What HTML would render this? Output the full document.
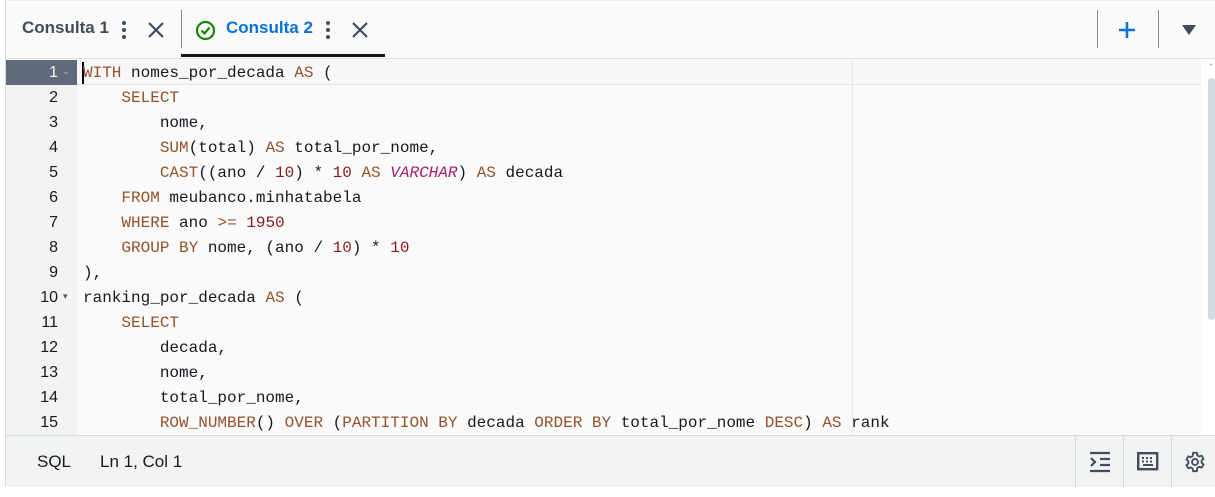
<!DOCTYPE html>
<html><head><meta charset="utf-8"><style>
*{margin:0;padding:0;box-sizing:border-box}
body{width:1215px;height:497px;background:#fff;font-family:"Liberation Sans",sans-serif;position:relative;overflow:hidden}
.wrap{position:absolute;left:5px;top:0;right:0;height:487px;border-left:1px solid #d5dbdb;background:#fafafa}
.tabs{position:absolute;left:0;top:0;right:0;height:59px;background:#fafafa;border-top:1px solid #eaeded;border-bottom:1px solid #dfe3e3}
.tab{position:absolute;top:17px;font-size:17px;font-weight:bold;color:#414d5c}
.sep{position:absolute;width:1px;background:#7d8998}
.code{position:absolute;left:0;top:60px;width:1195px;height:375px;background:#fafafa;overflow:hidden}
.gut{position:absolute;left:0;top:0;width:71px;height:375px;background:#f2f3f3}
.ln{position:absolute;left:0;width:71px;height:25px;text-align:right;padding-right:19px;font:16px/26px "Liberation Sans",sans-serif;color:#16191f}
.line{position:absolute;left:77px;height:25px;font:16px/26px "Liberation Mono",monospace;color:#16191f;white-space:pre}
.k{color:#93532a}.n{color:#8b1a1a}.t{color:#a3216e;font-style:italic}
.foot{position:absolute;left:0;right:0;top:435px;height:52px;background:#f2f3f3;border-top:1px solid #d5dbdb}
</style></head><body>
<div class="wrap">
<div class="tabs">
 <div class="tab" style="left:16px">Consulta 1</div>
 <svg style="position:absolute;left:115px;top:19px" width="6" height="20"><circle cx="3" cy="3" r="2" fill="#414d5c"/><circle cx="3" cy="10" r="2" fill="#414d5c"/><circle cx="3" cy="17" r="2" fill="#414d5c"/></svg>
 <svg style="position:absolute;left:141px;top:20px" width="18" height="18"><path d="M2 2L16 16M16 2L2 16" stroke="#414d5c" stroke-width="2.2"/></svg>
 <div class="sep" style="left:175px;top:9px;height:38px"></div>
 <svg style="position:absolute;left:189px;top:19px" width="21" height="21"><circle cx="10.5" cy="10.5" r="8.5" fill="none" stroke="#1d8102" stroke-width="2.2"/><path d="M6.5 10.5l3 3 5-6" fill="none" stroke="#1d8102" stroke-width="2.2"/></svg>
 <div class="tab" style="left:220px;color:#0972d3">Consulta 2</div>
 <svg style="position:absolute;left:319px;top:19px" width="6" height="20"><circle cx="3" cy="3" r="2" fill="#414d5c"/><circle cx="3" cy="10" r="2" fill="#414d5c"/><circle cx="3" cy="17" r="2" fill="#414d5c"/></svg>
 <svg style="position:absolute;left:345px;top:20px" width="18" height="18"><path d="M2 2L16 16M16 2L2 16" stroke="#414d5c" stroke-width="2.2"/></svg>
 <div style="position:absolute;left:175px;top:53px;width:204px;height:3px;background:#16191f"></div>
 <div class="sep" style="left:1091px;top:9px;height:38px"></div>
 <svg style="position:absolute;left:1112px;top:20px" width="18" height="18"><path d="M9 1V17M1 9H17" stroke="#0972d3" stroke-width="2.6"/></svg>
 <div class="sep" style="left:1152px;top:9px;height:38px"></div>
 <svg style="position:absolute;left:1175px;top:23px" width="16" height="12"><path d="M1 1H15L8 11Z" fill="#414d5c"/></svg>
</div>
<div class="code">
 <div class="gut"></div>
 <div style="position:absolute;left:0;top:0;width:71px;height:25px;background:#5f6b7a"></div>
 <div style="position:absolute;left:71px;top:0;width:1124px;height:25px;background:#f7f7f7;border-bottom:1px solid #e6e6e6"></div>
 <div style="position:absolute;left:846px;top:0;width:1px;height:375px;background:#e8e8e8"></div>
 <div style="position:absolute;left:76px;top:2px;width:2px;height:22px;background:#000"></div>
 <div class="ln" style="top:0;color:#fff">1</div><div style="position:absolute;left:56px;top:6px;font-size:10px;color:#aab">⌄</div>
 <div class="ln" style="top:25px">2</div><div class="ln" style="top:50px">3</div><div class="ln" style="top:75px">4</div><div class="ln" style="top:100px">5</div><div class="ln" style="top:125px">6</div><div class="ln" style="top:150px">7</div><div class="ln" style="top:175px">8</div><div class="ln" style="top:200px">9</div><div class="ln" style="top:225px">10</div><div style="position:absolute;left:57px;top:231px;font-size:9px;color:#555">▾</div><div class="ln" style="top:250px">11</div><div class="ln" style="top:275px">12</div><div class="ln" style="top:300px">13</div><div class="ln" style="top:325px">14</div><div class="ln" style="top:350px">15</div>
 <div class="line" style="top:0"><span class="k">WITH</span> nomes_por_decada <span class="k">AS</span> (</div>
 <div class="line" style="top:25px">    <span class="k">SELECT</span></div>
 <div class="line" style="top:50px">        nome,</div>
 <div class="line" style="top:75px">        <span class="k">SUM</span>(total) <span class="k">AS</span> total_por_nome,</div>
 <div class="line" style="top:100px">        <span class="k">CAST</span>((ano / <span class="n">10</span>) * <span class="n">10</span> <span class="k">AS</span> <span class="t">VARCHAR</span>) <span class="k">AS</span> decada</div>
 <div class="line" style="top:125px">    <span class="k">FROM</span> meubanco.minhatabela</div>
 <div class="line" style="top:150px">    <span class="k">WHERE</span> ano <span class="k">&gt;=</span> <span class="n">1950</span></div>
 <div class="line" style="top:175px">    <span class="k">GROUP BY</span> nome, (ano / <span class="n">10</span>) * <span class="n">10</span></div>
 <div class="line" style="top:200px">),</div>
 <div class="line" style="top:225px">ranking_por_decada <span class="k">AS</span> (</div>
 <div class="line" style="top:250px">    <span class="k">SELECT</span></div>
 <div class="line" style="top:275px">        decada,</div>
 <div class="line" style="top:300px">        nome,</div>
 <div class="line" style="top:325px">        total_por_nome,</div>
 <div class="line" style="top:350px">        <span class="k">ROW_NUMBER</span>() <span class="k">OVER</span> (<span class="k">PARTITION BY</span> decada <span class="k">ORDER BY</span> total_por_nome <span class="k">DESC</span>) <span class="k">AS</span> rank</div>
</div>
<div style="position:absolute;left:1195px;top:60px;width:15px;height:375px;background:#fff"></div>
<div style="position:absolute;left:1202px;top:78px;width:7px;height:242px;background:#d5dbe3;border-radius:4px"></div>
<div style="position:absolute;left:1201px;top:62px;font-size:9px;color:#aaa">⌃</div>
<div class="foot">
 <div style="position:absolute;left:31px;top:16px;font-size:17px;color:#16191f">SQL</div>
 <div style="position:absolute;left:94px;top:16px;font-size:17px;color:#16191f">Ln 1, Col 1</div>
 <div style="position:absolute;left:1069px;top:0;width:1px;height:52px;background:#d5dbdb"></div>
 <div style="position:absolute;left:1117px;top:0;width:1px;height:52px;background:#d5dbdb"></div>
 <div style="position:absolute;left:1165px;top:0;width:1px;height:52px;background:#d5dbdb"></div>
 <svg style="position:absolute;left:1083px;top:15px" width="22" height="22"><path d="M1 2H21M11 8H21M11 14H21M1 20H21M2 7l4 4-4 4" fill="none" stroke="#414d5c" stroke-width="2.2"/></svg>
 <svg style="position:absolute;left:1131px;top:16px" width="22" height="20"><rect x="1.2" y="1.2" width="19" height="16" fill="none" stroke="#414d5c" stroke-width="2.4"/><path d="M5 6h2M9 6h2M13 6h2M5 9.5h2M9 9.5h2M13 9.5h2M6 13h10" stroke="#414d5c" stroke-width="2"/></svg>
 <svg style="position:absolute;left:1178px;top:15px" width="22" height="22" viewBox="0 0 24 24"><path d="M10 2h4l.6 2.8 2 1.2 2.7-.9 2 3.4-2.1 1.9v2.4l2.1 1.9-2 3.4-2.7-.9-2 1.2L14 22h-4l-.6-2.8-2-1.2-2.7.9-2-3.4 2.1-1.9v-2.4L2.7 9.3l2-3.4 2.7.9 2-1.2z" fill="none" stroke="#414d5c" stroke-width="2"/><circle cx="12" cy="12" r="3.3" fill="none" stroke="#414d5c" stroke-width="2"/></svg>
</div>
</div>
</body></html>
